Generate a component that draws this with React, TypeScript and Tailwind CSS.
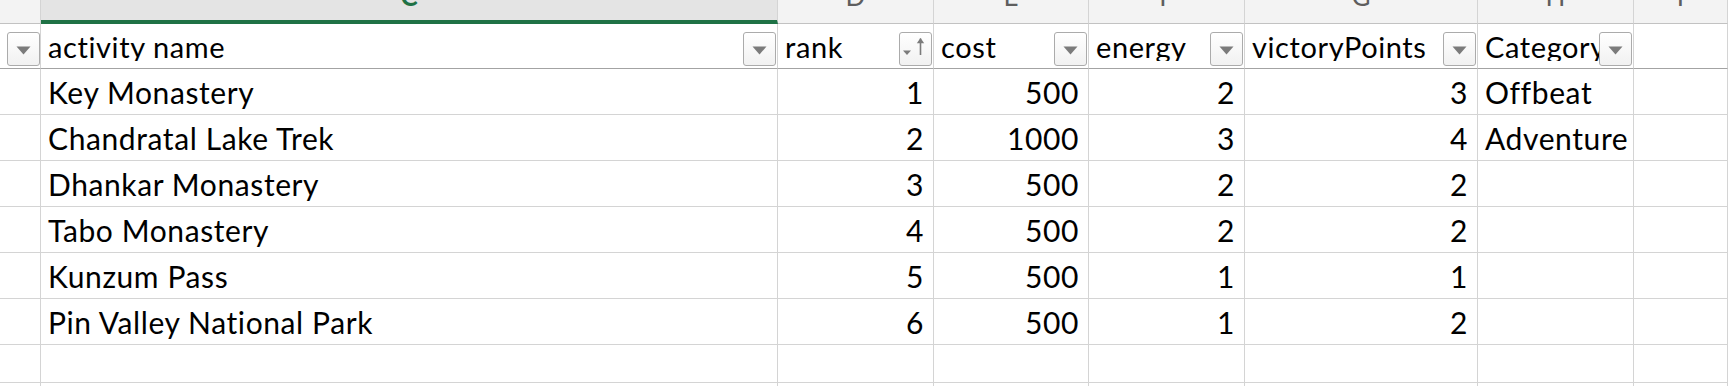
import React from 'react';

type Col = {
  letter: string;
  header: string;
  align: 'left' | 'right';
  filter: 'none' | 'filter' | 'sort';
  selected?: boolean;
};

const columns: Col[] = [
  { letter: '', header: '', align: 'left', filter: 'filter' },
  { letter: 'C', header: 'activity name', align: 'left', filter: 'filter', selected: true },
  { letter: 'D', header: 'rank', align: 'right', filter: 'sort' },
  { letter: 'E', header: 'cost', align: 'right', filter: 'filter' },
  { letter: 'F', header: 'energy', align: 'right', filter: 'filter' },
  { letter: 'G', header: 'victoryPoints', align: 'right', filter: 'filter' },
  { letter: 'H', header: 'Category', align: 'left', filter: 'filter' },
  { letter: 'I', header: '', align: 'left', filter: 'none' },
];

const rows: string[][] = [
  ['', 'Key Monastery', '1', '500', '2', '3', 'Offbeat', ''],
  ['', 'Chandratal Lake Trek', '2', '1000', '3', '4', 'Adventure', ''],
  ['', 'Dhankar Monastery', '3', '500', '2', '2', '', ''],
  ['', 'Tabo Monastery', '4', '500', '2', '2', '', ''],
  ['', 'Kunzum Pass', '5', '500', '1', '1', '', ''],
  ['', 'Pin Valley National Park', '6', '500', '1', '2', '', ''],
];

const gridCols = 'grid grid-cols-[41px_737px_156px_155px_156px_233px_156px_1fr]';

function FilterButton({ sort }: { sort?: boolean }) {
  return (
    <div className="relative z-10 w-[33px] h-[34px] shrink-0 rounded-[3px] border border-[#ababab] bg-linear-to-b from-white to-[#f1f1f1] flex items-center justify-center">
      {sort ? (
        <svg width="31" height="32" viewBox="0 0 31 32">
          <path d="M3 17.5H11L7 22Z" fill="#7b7b7b" />
          <path d="M20.5 22V5.5" stroke="#7b7b7b" strokeWidth="1.6" />
          <path d="M16.8 10.2L20.5 5L24.2 10.2Z" fill="#7b7b7b" />
        </svg>
      ) : (
        <svg width="15" height="9" viewBox="0 0 15 9" className="mt-[2px]">
          <path d="M0.5 0.5H14.5L7.5 8.5Z" fill="#7b7b7b" />
        </svg>
      )}
    </div>
  );
}

export default function App() {
  return (
    <div className="w-[1728px] h-[386px] overflow-hidden bg-white text-black font-['Lato','Noto_Sans',sans-serif]">
      {/* column letters band */}
      <div className={gridCols}>
        {columns.map((c, i) => (
          <div
            key={i}
            className={
              c.selected
                ? 'h-[24px] overflow-hidden border-r border-[#d4d4d4] border-b-[4px] border-b-[#1f7245] bg-[#e4e4e4] flex justify-center'
                : 'h-[24px] overflow-hidden border-r border-[#d4d4d4] border-b border-b-[#c2c2c2] bg-[#f3f3f3] flex justify-center'
            }
          >
            <span
              className={
                c.selected
                  ? 'mt-[-17px] text-[26px] leading-none font-bold text-[#1f7245]'
                  : 'mt-[-17px] text-[26px] leading-none text-[#5e5e5e]'
              }
            >
              {c.letter}
            </span>
          </div>
        ))}
      </div>

      {/* table header row (frozen) */}
      <div className={gridCols}>
        {columns.map((c, i) => (
          <div
            key={i}
            className="h-[45px] border-r border-[#d4d4d4] border-b border-b-[#a3a3a3] flex items-end pb-[2px] pr-[1px]"
          >
            <div className="flex-1 min-w-0 overflow-hidden whitespace-nowrap pl-[7px] mb-[5px] text-[29px] tracking-[0.6px] leading-none">
              {c.header}
            </div>
            {c.filter === 'filter' && <FilterButton />}
            {c.filter === 'sort' && <FilterButton sort />}
          </div>
        ))}
      </div>

      {/* data rows */}
      {rows.map((r, ri) => (
        <div key={ri} className={gridCols}>
          {r.map((v, ci) => (
            <div
              key={ci}
              className={
                columns[ci].align === 'right'
                  ? 'h-[46px] border-r border-b border-[#d4d4d4] flex items-end justify-end pr-[9px] pb-[7px] text-[30px] tracking-[0.6px] leading-none whitespace-nowrap'
                  : 'h-[46px] border-r border-b border-[#d4d4d4] flex items-end pl-[7px] pb-[7px] text-[30px] tracking-[0.6px] leading-none whitespace-nowrap overflow-hidden'
              }
            >
              {v}
            </div>
          ))}
        </div>
      ))}

      {/* empty rows below the table */}
      <div className={gridCols}>
        {columns.map((_, i) => (
          <div key={i} className="h-[38px] border-r border-b border-[#d4d4d4]" />
        ))}
      </div>
      <div className={gridCols}>
        {columns.map((_, i) => (
          <div key={i} className="h-[38px] border-r border-b border-[#d4d4d4]" />
        ))}
      </div>
    </div>
  );
}
